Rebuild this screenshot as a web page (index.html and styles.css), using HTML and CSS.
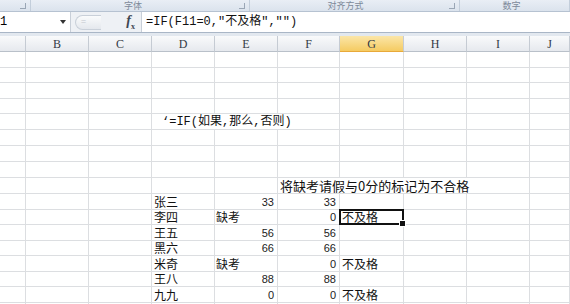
FILE: index.html
```html
<!DOCTYPE html>
<html>
<head>
  <meta charset="utf-8">
  <title>IF 函数</title>
  <link rel="stylesheet" href="styles.css">
</head>
<body>
  <div class="ribbon-groups">
    <div class="group g0"><span class="launcher"></span></div>
    <div class="group g1"><span class="group-name">字体</span><span class="launcher"></span></div>
    <div class="group g2"><span class="group-name">对齐方式</span><span class="launcher"></span></div>
    <div class="group g3"><span class="group-name">数字</span></div>
  </div>

  <div class="formula-bar">
    <div class="name-box">
      <span>1</span>
      <svg class="dropdown" width="6" height="4" viewBox="0 0 6 4"><path d="M0 0h6L3 4z" fill="#333"/></svg>
    </div>
    <div class="fx-area">
      <div class="pill"><span>=</span></div>
      <span class="fx"><i>f</i><sub>x</sub></span>
    </div>
    <div class="formula-input">=IF(F11=0,"不及格","")</div>
  </div>
  <div class="gap"></div>

  <div class="sheet">
    <!-- column headers -->
    <div class="ch"></div>
    <div class="ch">B</div>
    <div class="ch">C</div>
    <div class="ch">D</div>
    <div class="ch">E</div>
    <div class="ch">F</div>
    <div class="ch active">G</div>
    <div class="ch">H</div>
    <div class="ch">I</div>
    <div class="ch">J</div>

    <!-- rows 1-4 -->
    <div></div><div></div><div></div><div></div><div></div><div></div><div></div><div></div><div></div><div></div>
    <div></div><div></div><div></div><div></div><div></div><div></div><div></div><div></div><div></div><div></div>
    <div></div><div></div><div></div><div></div><div></div><div></div><div></div><div></div><div></div><div></div>
    <div></div><div></div><div></div><div></div><div></div><div></div><div></div><div></div><div></div><div></div>

    <!-- row 5 -->
    <div></div><div></div><div></div>
    <div class="span3 note">‘=IF(如果,那么,否则)</div>
    <div></div><div></div><div></div><div></div>

    <!-- rows 6-8 -->
    <div></div><div></div><div></div><div></div><div></div><div></div><div></div><div></div><div></div><div></div>
    <div></div><div></div><div></div><div></div><div></div><div></div><div></div><div></div><div></div><div></div>
    <div></div><div></div><div></div><div></div><div></div><div></div><div></div><div></div><div></div><div></div>

    <!-- row 9 -->
    <div></div><div></div><div></div><div></div><div></div>
    <div class="span4">将缺考请假与0分的标记为不合格</div>
    <div></div>

    <!-- data -->
    <div></div><div></div><div></div>
    <div>张三</div><div class="num">33</div><div class="num">33</div>
    <div></div><div></div><div></div><div></div>

    <div></div><div></div><div></div>
    <div>李四</div><div class="txt">缺考</div><div class="num">0</div>
    <div class="selected">不及格</div><div></div><div></div><div></div>

    <div></div><div></div><div></div>
    <div>王五</div><div class="num">56</div><div class="num">56</div>
    <div></div><div></div><div></div><div></div>

    <div></div><div></div><div></div>
    <div>黑六</div><div class="num">66</div><div class="num">66</div>
    <div></div><div></div><div></div><div></div>

    <div></div><div></div><div></div>
    <div>米奇</div><div class="txt">缺考</div><div class="num">0</div>
    <div>不及格</div><div></div><div></div><div></div>

    <div></div><div></div><div></div>
    <div>王八</div><div class="num">88</div><div class="num">88</div>
    <div></div><div></div><div></div><div></div>

    <div></div><div></div><div></div>
    <div>九九</div><div class="num">0</div><div class="num">0</div>
    <div>不及格</div><div></div><div></div><div></div>

    <div></div><div></div><div></div><div></div><div></div><div></div><div></div><div></div><div></div><div></div>
  </div>
</body>
</html>
```

FILE: styles.css
```css
body {
  margin: 0;
  width: 570px;
  height: 304px;
  overflow: hidden;
  background-color: #fff;
  font-family: "Noto Sans CJK SC", sans-serif;
}

/* ribbon group names */
.ribbon-groups {
  display: flex;
  height: 12px;
  background: linear-gradient(#e9eef5, #dbe3ed);
  border-bottom: 1px solid #b6c2d1;
  box-sizing: border-box;
  overflow: hidden;
}

.group {
  position: relative;
  display: flex;
  justify-content: center;
  align-items: center;
  border-right: 1px solid #c3cedb;
  box-sizing: border-box;
}

.g0 { width: 31px; }
.g1 { width: 219px; padding-right: 14px; }
.g2 { width: 210px; padding-right: 18px; }
.g3 { flex: 1; padding-right: 6px; }

.group-name {
  font-size: 9px;
  line-height: 11px;
  color: #7d8999;
}

.launcher {
  position: absolute;
  right: 4px;
  bottom: 2px;
  width: 5px;
  height: 5px;
  border-right: 1px solid #9aa6b5;
  border-bottom: 1px solid #9aa6b5;
}

/* formula bar */
.formula-bar {
  display: flex;
  height: 21px;
  background-color: #eef1f5;
  border-bottom: 1px solid #a9b6c6;
  box-sizing: border-box;
}

.name-box {
  width: 71px;
  display: flex;
  align-items: center;
  justify-content: space-between;
  padding-right: 4px;
  box-sizing: border-box;
  background-color: #fff;
  border-right: 1px solid #c8cfd8;
  font-family: "Liberation Mono", monospace;
  font-size: 12px;
}

.fx-area {
  width: 70px;
  display: flex;
  align-items: center;
  justify-content: space-between;
  padding: 0 6px 0 4px;
  box-sizing: border-box;
}

.pill {
  width: 26px;
  height: 15px;
  border: 1px solid #c9d0d9;
  border-right: none;
  border-radius: 9px 0 0 9px;
  background: linear-gradient(#fafbfc, #e4e8ed);
  box-sizing: border-box;
  font-size: 9px;
  line-height: 12px;
  color: #c2c7ce;
  padding-left: 5px;
}

.fx {
  font-family: "Liberation Serif", serif;
  font-weight: bold;
  font-size: 14px;
  color: #3d4652;
}

.fx sub {
  font-size: 8px;
  font-style: normal;
}

.formula-input {
  flex: 1;
  background-color: #fff;
  border-left: 1px solid #c8cfd8;
  padding-left: 4px;
  font-family: "Liberation Mono", "Noto Sans CJK SC", monospace;
  font-size: 12px;
  line-height: 20px;
  color: #111;
  white-space: nowrap;
}

.gap {
  height: 3px;
  background-color: #e2e8ef;
}

/* sheet grid */
.sheet {
  display: grid;
  grid-template-columns: 26px 63px 63px 63px 63px 62px 64px 63px 63px 1fr;
  grid-template-rows: 16px 16px 15px 16px 15px 16px 16px 16px 16px 16px 16px 15px 16px 15px 16px 15px 16px 16px;
}

.sheet > div {
  display: flex;
  align-items: center;
  padding: 0 2px;
  border-right: 1px solid #dcdee1;
  border-bottom: 1px solid #dcdee1;
  font-size: 12px;
  line-height: 14px;
  color: #111;
  white-space: nowrap;
  min-width: 0;
}

.sheet > .ch {
  justify-content: center;
  background: linear-gradient(#f9fafb, #e6e9ee);
  border-right: 1px solid #c5cbd3;
  border-bottom: 1px solid #b9c0c9;
  font-family: "Liberation Serif", serif;
  font-size: 12px;
  color: #333a44;
}

.sheet > .ch.active {
  background: linear-gradient(#fbe6a8, #f5cb62);
  border-bottom-color: #e8a93a;
}

.sheet > .num {
  justify-content: flex-end;
  padding-right: 3px;
  font-family: "Liberation Sans", Arial, sans-serif;
  font-size: 11px;
  color: #222;
}

.sheet > .txt {
  padding-left: 1px;
}

.sheet > .span3 {
  grid-column: span 3;
}

.sheet > .span4 {
  grid-column: span 4;
  padding-left: 2px;
  font-size: 13px;
}

.sheet > .note {
  padding-left: 10px;
  font-family: "Liberation Mono", "Noto Sans CJK SC", monospace;
  font-size: 12px;
}

.sheet > .selected {
  position: relative;
}

.selected::after {
  content: "";
  position: absolute;
  left: -1px;
  top: -1px;
  right: -1px;
  bottom: -1px;
  border: 2px solid #111;
}

.selected::before {
  content: "";
  position: absolute;
  right: -3px;
  bottom: -3px;
  width: 5px;
  height: 5px;
  background-color: #111;
  border: 1px solid #fff;
  z-index: 1;
}
```
